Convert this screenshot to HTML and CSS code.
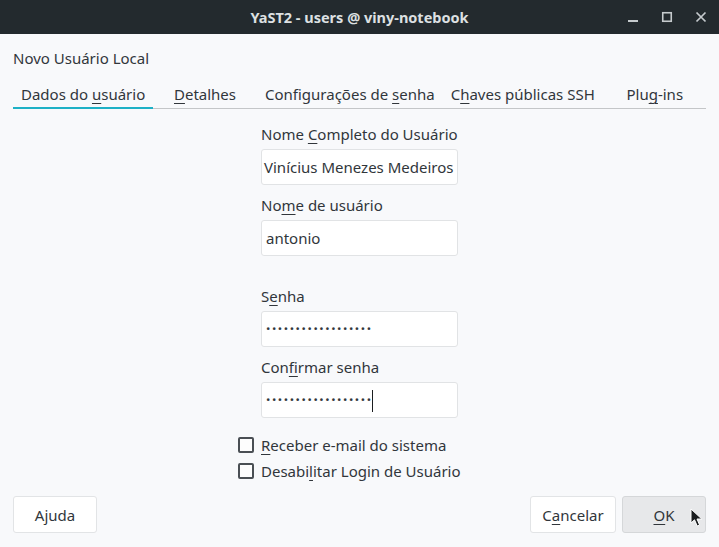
FILE: index.html
```html
<!DOCTYPE html>
<html lang="pt">
<head>
<meta charset="utf-8">
<title>YaST2 - users @ viny-notebook</title>
<link rel="stylesheet" href="styles.css">
</head>
<body>
<div class="window">
  <div class="titlebar">
    <div class="title">YaST2 - users @ viny-notebook</div>
    <div class="winbtns">
      <svg class="wb" width="12" height="12" viewBox="0 0 12 12"><rect x="1" y="9" width="10" height="2" fill="#c5cacd"/></svg>
      <svg class="wb" width="12" height="12" viewBox="0 0 12 12"><rect x="1.75" y="1.75" width="8.5" height="8.5" fill="none" stroke="#c5cacd" stroke-width="1.6"/></svg>
      <svg class="wb" width="12" height="12" viewBox="0 0 12 12"><path d="M1.5 1.5 L10.5 10.5 M10.5 1.5 L1.5 10.5" stroke="#c5cacd" stroke-width="1.7"/></svg>
    </div>
  </div>
  <div class="content">
    <div class="heading">Novo Usuário Local</div>
    <div class="tabs">
      <div class="tab active">Dados do <u>u</u>suário</div>
      <div class="tab wide"><u>D</u>etalhes</div>
      <div class="tab">Configurações de <u>s</u>enha</div>
      <div class="tab">C<u>h</u>aves públicas SSH</div>
      <div class="tab wide">Plu<u>g</u>-ins</div>
    </div>
    <div class="form">
      <div class="col">
        <div class="label first">Nome <u>C</u>ompleto do Usuário</div>
        <div class="field scrolled">Vinícius Menezes Medeiros</div>
        <div class="label">No<u>m</u>e de usuário</div>
        <div class="field">antonio</div>
        <div class="label gap">S<u>e</u>nha</div>
        <div class="field dots">••••••••••••••••••</div>
        <div class="label">Con<u>f</u>irmar senha</div>
        <div class="field dots">••••••••••••••••••<span class="caret"></span></div>
      </div>
      <div class="checks">
        <div class="check"><span class="box"></span><span><u>R</u>eceber e-mail do sistema</span></div>
        <div class="check"><span class="box"></span><span>Desabi<u>l</u>itar Login de Usuário</span></div>
      </div>
    </div>
    <div class="buttons">
      <div class="btn">Ajuda</div>
      <div class="spacer"></div>
      <div class="btn cancel">C<u>a</u>ncelar</div>
      <div class="btn ok"><u>O</u>K
        <svg class="cursor" width="14" height="20" viewBox="0 0 14 20"><path d="M1 1 L1 15 L4.5 11.8 L7.2 18 L9.6 17 L7 11 L11.8 11 Z" fill="#1b1e20" stroke="#fff" stroke-width="1"/></svg>
      </div>
    </div>
  </div>
</div>
</body>
</html>
```
FILE: styles.css
```css
* { box-sizing: border-box; }
html, body { margin: 0; padding: 0; }
body {
  width: 719px;
  height: 547px;
  overflow: hidden;
  background: #f8f9fb;
  font-family: "Noto Sans", "Open Sans", sans-serif;
  font-size: 15px;
  color: #31363b;
}
u { text-decoration-thickness: 1px; text-underline-offset: 3px; }
.window { display: flex; flex-direction: column; height: 547px; }
.titlebar {
  flex: 0 0 34px;
  height: 34px;
  background: #232a2e;
  position: relative;
  display: flex;
  align-items: center;
  justify-content: center;
}
.title {
  color: #dde0e2;
  font-weight: bold;
  font-size: 14.5px;
}
.winbtns {
  position: absolute;
  right: 12px;
  top: 11px;
  display: flex;
  gap: 22px;
}
.wb { display: block; }
.content { padding: 0 13px; flex: 1; display: flex; flex-direction: column; }
.heading { margin-top: 14px; line-height: 20px; }
.tabs {
  margin-top: 16px;
  display: flex;
  width: 693px;
  border-bottom: 1px solid #c4c6c8;
}
.tab {
  line-height: 20px;
  padding: 0 8px 3px;
  text-align: center;
  white-space: nowrap;
}
.tab.wide { min-width: 104px; }
.tab.active {
  width: 140px;
  border-bottom: 2px solid #1eb1c6;
  margin-bottom: -1px;
}
.form { margin-left: 225px; width: 240px; }
.col { margin-left: 23px; width: 197px; display: flex; flex-direction: column; }
.label { line-height: 20px; margin-top: 10px; margin-bottom: 5px; white-space: nowrap; }
.label.first { margin-top: 15px; }
.label.gap { margin-top: 30px; }
.field {
  height: 36px;
  background: #fff;
  border: 1px solid #e1e3e5;
  border-radius: 3px;
  padding: 0 4px;
  line-height: 34px;
  white-space: nowrap;
  overflow: hidden;
}
.field.scrolled { padding-left: 2px; }
.field.dots { font-size: 11.5px; letter-spacing: 1.6px; }
.caret {
  display: inline-block;
  width: 1px;
  height: 22px;
  background: #1b1e20;
  vertical-align: middle;
  margin-left: -1px;
}
.checks { margin-top: 17px; display: flex; flex-direction: column; gap: 6px; }
.check { display: flex; align-items: center; gap: 7px; line-height: 20px; white-space: nowrap; }
.box {
  flex: 0 0 16px;
  width: 16px;
  height: 16px;
  border: 2px solid #4a4f54;
  border-radius: 2px;
  background: #fdfdfd;
}
.buttons { margin-top: 15px; display: flex; gap: 6px; }
.spacer { flex: 1; }
.btn {
  height: 37px;
  width: 84px;
  background: #fff;
  border: 1px solid #e2e4e6;
  border-radius: 3px;
  display: flex;
  align-items: center;
  justify-content: center;
  position: relative;
}
.btn.cancel { width: 86px; }
.btn.ok { background: #e7e8ea; border-color: #d5d7d9; }
.cursor { position: absolute; left: 67px; top: 11px; }
```
